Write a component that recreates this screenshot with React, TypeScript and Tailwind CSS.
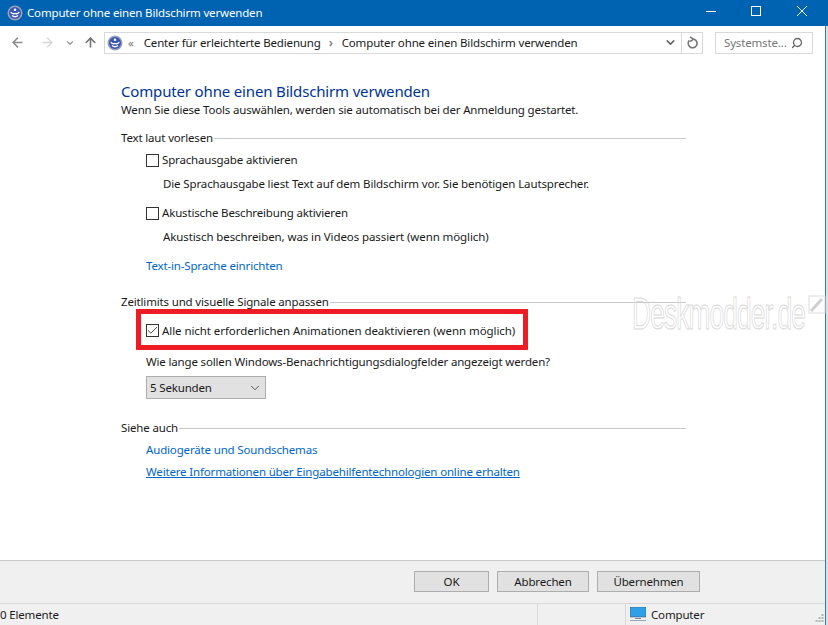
import React from "react";
import { ArrowLeft, ArrowRight, ArrowUp, ChevronDown, Search, Check } from "lucide-react";

const font = "font-['Noto_Sans','Open_Sans',sans-serif]";

function EaseIcon({ size = 16 }: { size?: number }) {
  return (
    <svg width={size} height={size} viewBox="0 0 16 16" className="shrink-0">
      <circle cx="8" cy="8" r="7.5" fill="#9aa3b8" />
      <circle cx="8" cy="8" r="6" fill="#3a55b8" />
      <circle cx="8" cy="4.8" r="1.3" fill="#fff" />
      <path d="M3.8 7 Q5 9.5 8 8.5 Q11 9.5 12.2 7 M5 10.5 Q8 13 11 10.5" stroke="#fff" strokeWidth="1.3" fill="none" />
    </svg>
  );
}

function GroupHeading({ children }: { children: React.ReactNode }) {
  return (
    <div className="flex items-center gap-px h-[16px] text-[#1a1a1a]">
      <span>{children}</span>
      <div className="flex-1 h-px bg-[#c8c8c8]" />
    </div>
  );
}

function CheckRow({ label, checked }: { label: string; checked?: boolean }) {
  return (
    <div className="flex items-center gap-[3px] h-[16px] text-[#1a1a1a] whitespace-nowrap">
      <div className="w-[13px] h-[13px] border border-[#333] bg-white flex items-center justify-center">
        {checked && <Check size={13} strokeWidth={1.5} color="#222" className="shrink-0" />}
      </div>
      <span>{label}</span>
    </div>
  );
}

function FooterButton({ label, w }: { label: string; w: string }) {
  return (
    <button className={`h-[21px] ${w} bg-[#e1e1e1] border border-[#adadad] leading-none text-[#1a1a1a]`}>
      {label}
    </button>
  );
}

export default function App() {
  return (
    <div className={`w-[828px] h-[625px] flex flex-col bg-white overflow-hidden relative ${font} text-[11.5px] leading-[16px] tracking-[-0.16px]`}>
      {/* title bar */}
      <div className="h-[26px] bg-[#0063b1] flex items-center pl-[7px] text-white shrink-0">
        <EaseIcon />
        <span className="ml-[4px]">Computer ohne einen Bildschirm verwenden</span>
        <div className="ml-auto flex items-center pb-[4px]">
          <svg width="10" height="10" viewBox="0 0 10 10" className="mr-[35px]"><path d="M0 5.5H10" stroke="#fff" /></svg>
          <svg width="10" height="10" viewBox="0 0 10 10" className="mr-[36px]"><rect x=".5" y=".5" width="9" height="9" fill="none" stroke="#fff" /></svg>
          <svg width="10" height="10" viewBox="0 0 10 10" className="mr-[21px]"><path d="M0 0L10 10M10 0L0 10" stroke="#fff" /></svg>
        </div>
      </div>

      <div className="flex-1 flex flex-col border-r-2 border-[#dedede] min-h-0">
        <div className="flex-1 flex flex-col border-r border-[#2f7fb5] min-h-0">
          {/* nav */}
          <div className="h-[33px] flex items-center pl-[10px] pr-[11px] shrink-0 whitespace-nowrap">
            <ArrowLeft size={15} strokeWidth={2.5} color="#8c8c8c" />
            <ArrowRight size={15} strokeWidth={2.2} color="#d5d5d5" className="ml-[15px]" />
            <ChevronDown size={10} strokeWidth={3} color="#999" className="ml-[10px]" />
            <ArrowUp size={15} strokeWidth={2.6} color="#777" className="ml-[8px]" />
            <div className="ml-[6px] w-[599px] h-[22px] border border-[#d9d9d9] flex items-center pl-[2px] text-[#1a1a1a]">
              <EaseIcon />
              <span className="ml-[5px] text-[#777]">«</span>
              <span className="ml-[10px]">Center für erleichterte Bedienung</span>
              <span className="ml-[8px] text-[#888] font-bold">›</span>
              <span className="ml-[9px] tracking-[-0.15px]">Computer ohne einen Bildschirm verwenden</span>
              <ChevronDown size={13} strokeWidth={3} color="#666" className="ml-auto mr-[4px]" />
              <div className="w-[21px] h-full border-l border-[#d9d9d9] flex items-center justify-center">
                <svg width="11" height="14" viewBox="0 0 11 14" fill="none" stroke="#777" strokeWidth="1.6">
                  <path d="M7 3.2A4.4 4.4 0 1 1 2.4 4.4" />
                  <path d="M3 .8L6.6 3.2L3 5.6" />
                </svg>
              </div>
            </div>
            <div className="ml-[12px] w-[98px] h-[22px] border border-[#d9d9d9] flex items-center pl-[8px] pr-[9px] text-[#777]">
              <span>Systemste...</span>
              <Search size={12} strokeWidth={2.6} color="#666" className="ml-auto -scale-x-100" />
            </div>
          </div>

          {/* content */}
          <div className="flex-1 flex flex-col pl-[121px] pr-[139px] pt-[21px] text-[#1a1a1a]">
            <h1 className="text-[15px] leading-[22px] tracking-[-0.16px] font-normal text-[#003399]">Computer ohne einen Bildschirm verwenden</h1>
            <p>Wenn Sie diese Tools auswählen, werden sie automatisch bei der Anmeldung gestartet.</p>

            <div className="mt-[12px]">
              <GroupHeading>Text laut vorlesen</GroupHeading>
            </div>
            <div className="pl-[25px] mt-[6px] flex flex-col">
              <CheckRow label="Sprachausgabe aktivieren" />
              <p className="pl-[17px] mt-[8px] tracking-[-0.13px]">Die Sprachausgabe liest Text auf dem Bildschirm vor. Sie benötigen Lautsprecher.</p>
              <div className="mt-[13px]"><CheckRow label="Akustische Beschreibung aktivieren" /></div>
              <p className="pl-[17px] mt-[8px] tracking-[-0.1px]">Akustisch beschreiben, was in Videos passiert (wenn möglich)</p>
              <a className="mt-[13px] text-[#0066cc]">Text-in-Sprache einrichten</a>
            </div>

            <div className="mt-[20px]">
              <GroupHeading>Zeitlimits und visuelle Signale anpassen</GroupHeading>
            </div>
            <div className="pl-[25px] flex flex-col">
              <div className="-mt-px -ml-[10px] w-[392px] h-[41px] border-[5px] border-[#ed1c24] flex items-center pl-[5px] pt-[2px] tracking-[-0.07px]">
                <CheckRow label="Alle nicht erforderlichen Animationen deaktivieren (wenn möglich)" checked />
              </div>
              <p className="mt-[4px]">Wie lange sollen Windows-Benachrichtigungsdialogfelder angezeigt werden?</p>
              <div className="mt-[6px] w-[120px] h-[23px] bg-[#e1e1e1] border border-[#adadad] flex items-center pl-[3px] pr-[3px]">
                <span>5 Sekunden</span>
                <ChevronDown size={14} strokeWidth={1.5} color="#444" className="ml-auto" />
              </div>
            </div>

            <div className="mt-[21px]">
              <GroupHeading>Siehe auch</GroupHeading>
            </div>
            <div className="pl-[25px] mt-[6px] flex flex-col text-[#0066cc]">
              <a>Audiogeräte und Soundschemas</a>
              <a className="mt-[6px] underline">Weitere Informationen über Eingabehilfentechnologien online erhalten</a>
            </div>
          </div>

          {/* button bar */}
          <div className="h-[43px] shrink-0 bg-[#f0f0f0] border-t border-[#c8c8c8] flex items-start justify-end gap-[8px] pt-[10px] pr-[125px]">
            <FooterButton label="OK" w="w-[75px]" />
            <FooterButton label="Abbrechen" w="w-[92px]" />
            <FooterButton label="Übernehmen" w="w-[103px]" />
          </div>

          {/* status bar */}
          <div className="h-[22px] shrink-0 bg-[#f0f0f0] border-t border-[#d9d9d9] flex items-center text-[#1a1a1a]">
            <span className="w-[537px] pt-px">0 Elemente</span>
            <div className="w-[88px] h-full border-l border-[#d9d9d9]" />
            <div className="h-full flex-1 border-l border-[#d9d9d9] flex items-center pl-[4px] relative">
              <svg width="16" height="15" viewBox="0 0 16 15">
                <rect x="0" y="0" width="16" height="10" fill="#2f9fe8" stroke="#4a5a7a" strokeWidth="0.6" />
                <rect x="5" y="11" width="6" height="1" fill="#7a8aa0" />
                <rect x="0" y="13" width="16" height="1" fill="#9aa7b8" />
              </svg>
              <span className="ml-[5px] pt-px">Computer</span>
              <svg width="9" height="9" viewBox="0 0 9 9" fill="#b4b4b4" className="absolute right-[1px] bottom-[2px]">
                <rect x="6.5" y="0" width="2" height="2" />
                <rect x="3.5" y="3" width="2" height="2" />
                <rect x="6.5" y="3" width="2" height="2" />
                <rect x="0.5" y="6" width="2" height="2" />
                <rect x="3.5" y="6" width="2" height="2" />
                <rect x="6.5" y="6" width="2" height="2" />
              </svg>
            </div>
          </div>
        </div>
      </div>

      {/* watermark */}
      <div className="absolute left-[632px] top-[289px] text-[45px] leading-[50px] whitespace-nowrap font-['Liberation_Sans',sans-serif] tracking-[-1.5px] text-transparent [-webkit-text-stroke:1px_#d8d8d8] scale-x-[0.585] origin-left pointer-events-none">
        Deskmodder.de
      </div>
      <svg width="18" height="20" viewBox="0 0 18 20" className="absolute left-[808px] top-[295px] pointer-events-none">
        <rect x="1" y="1" width="16" height="17" fill="none" stroke="#dcdcdc" />
        <path d="M3 16L14 4" stroke="#d0d0d0" strokeWidth="3" />
      </svg>
    </div>
  );
}
